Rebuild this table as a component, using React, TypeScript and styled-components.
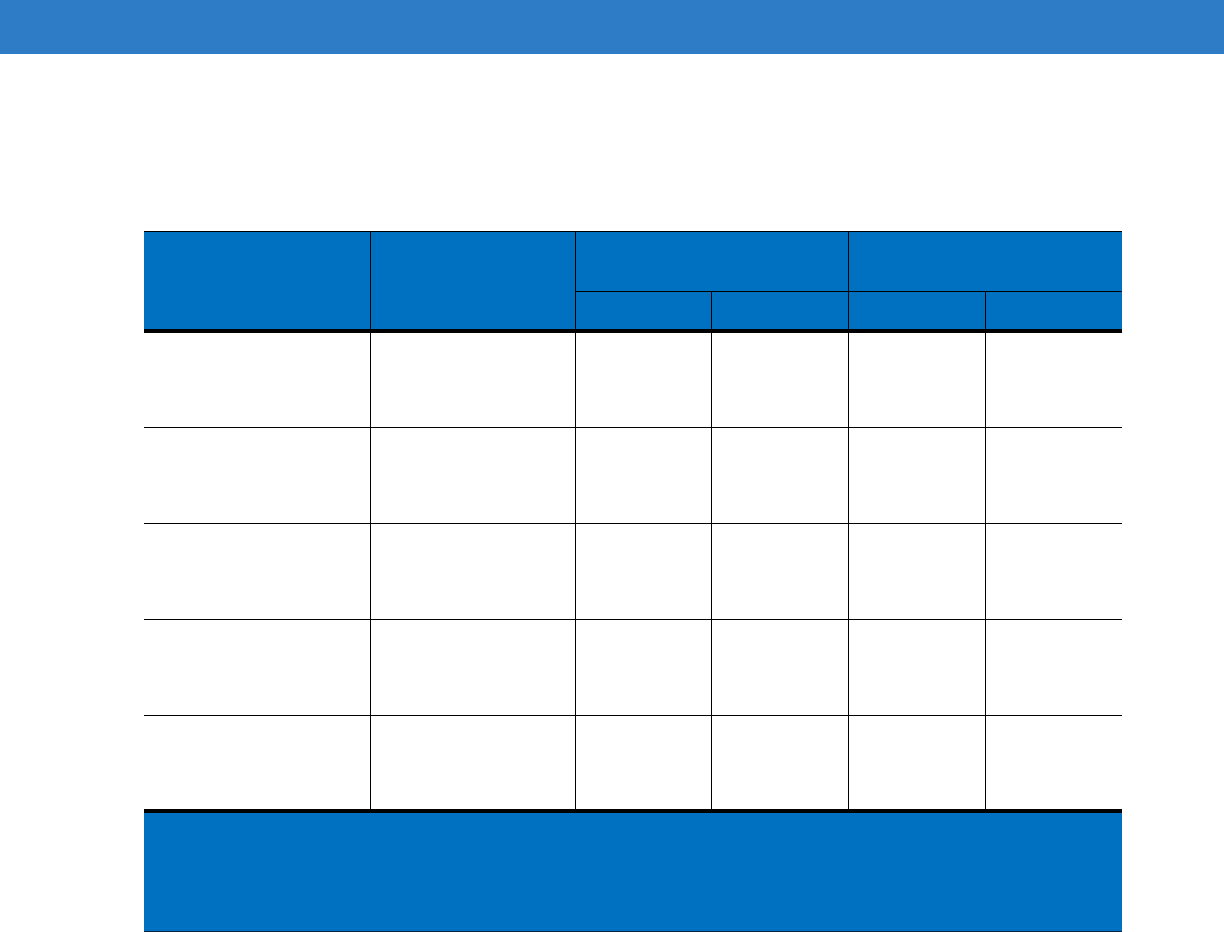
import React from 'react';
import styled, { createGlobalStyle } from 'styled-components';

const GlobalStyle = createGlobalStyle`
  html, body {
    margin: 0;
    padding: 0;
    background: #ffffff;
    font-family: "Liberation Sans", Arial, sans-serif;
  }
`;

const TopBar = styled.header`
  height: 54px;
  background: #2e7bc6;
`;

const Page = styled.main`
  padding: 177px 0 0 144px;
`;

const Table = styled.table`
  width: 978px;
  table-layout: fixed;
  border-collapse: separate;
  border-spacing: 0;
  font-size: 13px;
  color: #000;
`;

const HeadCell = styled.th<{ $divider?: boolean; $top?: boolean; $heavy?: boolean }>`
  box-sizing: border-box;
  padding: 0;
  background: #0071c1;
  color: #fff;
  font-weight: bold;
  text-align: left;
  vertical-align: top;
  border-left: ${(p) => (p.$divider ? '1px solid #000' : '0')};
  border-top: ${(p) => (p.$top ? '1px solid #000' : '0')};
  border-bottom: ${(p) => (p.$heavy ? '4px solid #000' : '1px solid #000')};
`;

const GroupRow = styled.tr`
  height: 61px;
`;

const SubRow = styled.tr`
  height: 41px;
`;

const BodyRow = styled.tr<{ $h: number }>`
  height: ${(p) => p.$h}px;
`;

const Cell = styled.td<{ $divider?: boolean; $last?: boolean }>`
  box-sizing: border-box;
  padding: 0;
  vertical-align: top;
  border-left: ${(p) => (p.$divider ? '1px solid #000' : '0')};
  border-bottom: ${(p) => (p.$last ? '0' : '1px solid #000')};
`;

const NoteCell = styled.td`
  box-sizing: border-box;
  height: 123px;
  padding: 0;
  background: #0071c1;
  border-top: 4px solid #000;
  border-bottom: 1px solid #0b2440;
`;

const widths = [226, 205, 136, 137, 137, 137];
const rowHeights = [95, 96, 96, 96, 93];

export default function App() {
  return (
    <>
      <GlobalStyle />
      <TopBar />
      <Page>
        <Table>
          <colgroup>
            {widths.map((w, i) => (
              <col key={i} style={{ width: w }} />
            ))}
          </colgroup>
          <thead>
            <GroupRow>
              <HeadCell rowSpan={2} $top $heavy />
              <HeadCell rowSpan={2} $top $heavy $divider />
              <HeadCell colSpan={2} $top $divider />
              <HeadCell colSpan={2} $top $divider />
            </GroupRow>
            <SubRow>
              <HeadCell $heavy $divider />
              <HeadCell $heavy $divider />
              <HeadCell $heavy $divider />
              <HeadCell $heavy $divider />
            </SubRow>
          </thead>
          <tbody>
            {rowHeights.map((h, r) => (
              <BodyRow key={r} $h={h}>
                {widths.map((_, c) => (
                  <Cell key={c} $divider={c > 0} $last={r === rowHeights.length - 1} />
                ))}
              </BodyRow>
            ))}
          </tbody>
          <tfoot>
            <tr>
              <NoteCell colSpan={6} />
            </tr>
          </tfoot>
        </Table>
      </Page>
    </>
  );
}
